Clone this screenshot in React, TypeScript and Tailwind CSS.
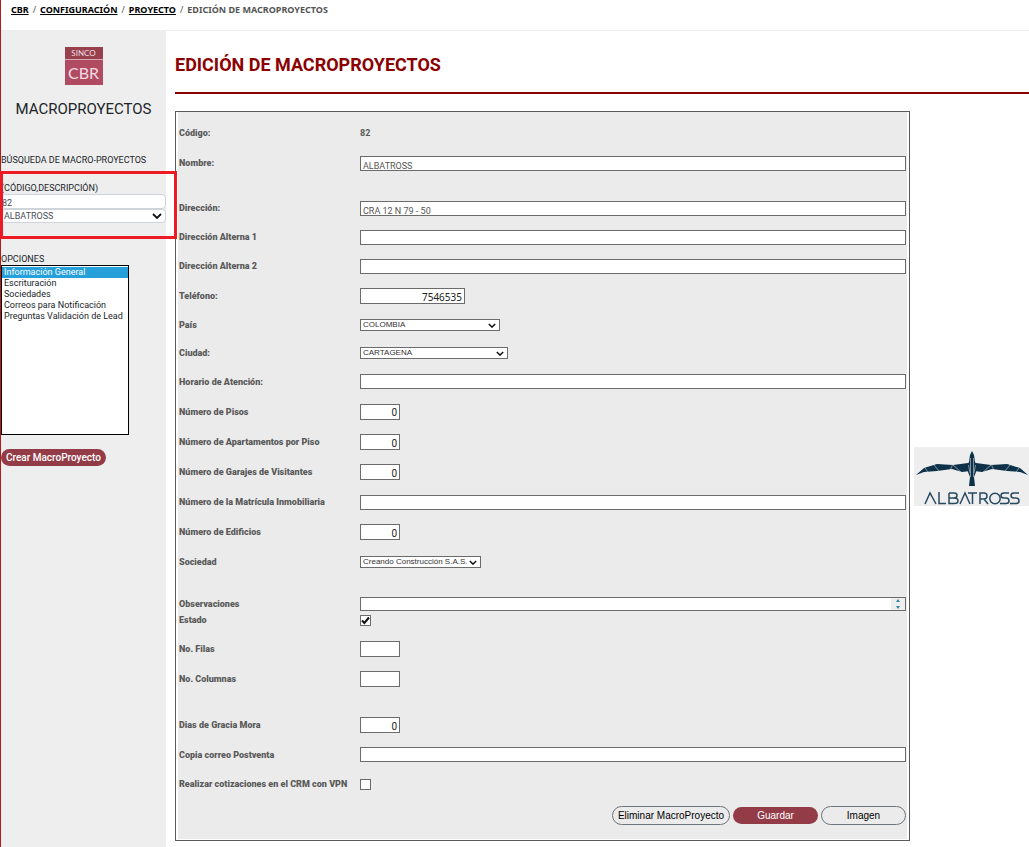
import { useState, type ReactNode } from "react";

const opciones = [
    "Información General",
    "Escrituración",
    "Sociedades",
    "Correos para Notificación",
    "Preguntas Validación de Lead",
];

const boxClass = "border border-[#6b6b6b] bg-white outline-none";
const textClass = boxClass + " w-full h-[15px] px-0.5 pt-[5px] text-[9px] leading-[12px] text-[#555]";
const numberClass = boxClass + " w-10 h-4 px-0.5 pt-0.5 text-[10px] leading-[14px] text-right text-[#222]";

function Chevron({ className }: { className: string }) {
    return (
        <svg viewBox="0 0 10 6" className={className} fill="none" stroke="#111" strokeWidth="1.8">
            <path d="M1 1 L5 5 L9 1" />
        </svg>
    );
}

function Row({ id, label, className, children }: { id: string; label: string; className: string; children: ReactNode }) {
    return (
        <div className={"flex items-center " + className}>
            <label htmlFor={id} className="w-[181px] shrink-0 whitespace-nowrap font-black">{label}</label>
            <div className="flex flex-1 items-center">{children}</div>
        </div>
    );
}

function Lista({ id, value, className }: { id: string; value: string; className: string }) {
    return (
        <div className={"relative " + className}>
            <select id={id} className="block h-3 w-full appearance-none border border-[#6b6b6b] bg-white pl-0.5 font-['Liberation_Sans'] text-[8px] leading-[10px] text-[#333] outline-none">
                <option>{value}</option>
            </select>
            <Chevron className="pointer-events-none absolute top-1 right-1 h-[5px] w-2" />
        </div>
    );
}

function Casilla({ id, checked }: { id: string; checked: boolean }) {
    const [on, setOn] = useState(checked);
    return (
        <div className="relative h-[11px] w-[11px]">
            <input
                id={id}
                type="checkbox"
                checked={on}
                onChange={(e) => setOn(e.target.checked)}
                className="block h-[11px] w-[11px] appearance-none border border-[#6b6b6b] bg-white"
            />
            {on && (
                <svg viewBox="0 0 11 11" className="pointer-events-none absolute inset-0" fill="none" stroke="#111" strokeWidth="2">
                    <path d="M2 5.5 L4.4 8 L9 2.5" />
                </svg>
            )}
        </div>
    );
}

function LogoCbr() {
    return (
        <div className="mx-auto h-[38px] w-[38px] bg-[#b04b62] text-center font-['Lato'] text-[#f3dde1]">
            <div className="h-[13px] border-b border-[#dba9b3] bg-[#98404e] text-[8px] leading-[12px]">SINCO</div>
            <div className="text-[16px] leading-[26px]">CBR</div>
        </div>
    );
}

function LogoAlbatross() {
    return (
        <svg viewBox="0 0 115 59" className="h-[59px] w-[115px] shrink-0 bg-[#eeeeee]" role="img" aria-label="Albatross">
            <g fill="#0d3149">
                <path d="M2 28 L10 21 L23 17 L39 18 L54 16 L56 24 L48 25 L38 22 L23 24 L10 25Z" />
                <path d="M114 28 L106 21 L93 17 L77 18 L62 16 L60 24 L68 25 L78 22 L93 24 L106 25Z" />
                <path d="M58 4 L60 8 L61 15 L63 18 L62 25 L60 30 L61 39 L55 39 L56 30 L54 25 L53 18 L55 15 L56 8Z" />
            </g>
            <g stroke="#cbd5dc" strokeWidth="0.6" fill="none">
                <path d="M20 18 L25 24 M39 17 L36 23 M39 18 L47 25 M96 18 L91 24 M77 17 L80 23 M77 18 L69 25 M11 21 L14 25 M105 21 L102 25" />
                <path d="M56.500 11 V30 M59.500 11 V30 M54.500 18 L56 26 M61.500 18 L60 26" />
            </g>
            <g stroke="#274a60" strokeWidth="1.500" fill="none">
                <path d="M11 57 L16 46 L22 57" />
                <path d="M25 45 V56.500 H32" />
                <path d="M35 46 H40 Q43 46 43 48.500 Q43 51 40 51 H35 M40 51 Q44 51 44 54 Q44 56.500 40 56.500 H35 V46" />
                <path d="M46 57 L51 46 L56 57" />
                <path d="M54 46 H63 M58.500 46 V57" />
                <path d="M66 57 V46 H70 Q73 46 73 49 Q73 52 70 52 H66 M70 52 L74 57" />
                <circle cx="81" cy="51.500" r="5.200" />
                <path d="M95 46 H90 Q87 46 87 48.500 Q87 51 90 51 H92 Q95 51 95 54 Q95 56.500 92 56.500 H86" />
                <path d="M105 46 H100 Q97 46 97 48.500 Q97 51 100 51 H102 Q105 51 105 54 Q105 56.500 102 56.500 H96" />
            </g>
        </svg>
    );
}

function Sidebar() {
    return (
        <aside className="w-[165px] shrink-0 bg-[#eeeeee] pt-4 text-[9px] leading-[12px] text-[#212529]">
            <LogoCbr />
            <h2 className="mt-[13px] text-center text-[15px] leading-[22px]">MACROPROYECTOS</h2>
            <p className="mt-[34px] whitespace-nowrap">BÚSQUEDA DE MACRO-PROYECTOS</p>

            <div className="relative mt-4">
                <label htmlFor="busqueda" className="block">(CÓDIGO,DESCRIPCIÓN)</label>
                <input id="busqueda" defaultValue="82" className="block h-[15px] w-full rounded-sm border border-[#ced4da] bg-white pt-0.5 text-[#495057] outline-none" />
                <select aria-label="Macroproyecto" className="block h-[14px] w-full appearance-none rounded-sm border border-[#ced4da] bg-white pl-0.5 text-[#495057] outline-none">
                    <option>ALBATROSS</option>
                </select>
                <Chevron className="pointer-events-none absolute right-1 bottom-1 h-[6px] w-[10px]" />
                {/* search highlight */}
                <div className="pointer-events-none absolute -top-[11px] -right-[11px] -bottom-4 -left-px border-3 border-[#ed1c24]"></div>
            </div>

            <label htmlFor="opciones" className="mt-[30px] block">OPCIONES</label>
            <select id="opciones" size={5} defaultValue={opciones[0]} className="block h-[170px] w-32 overflow-hidden border border-black bg-white pt-px font-medium outline-none">
                {opciones.map((o) => (
                    <option key={o} className="h-[11px] min-h-0 p-0 pl-0.5 leading-[12px] checked:bg-linear-to-r checked:from-[#26a0da] checked:to-[#26a0da] checked:[-webkit-text-fill-color:white]">{o}</option>
                ))}
            </select>
            <button type="button" className="mt-[14px] h-[17px] rounded-full bg-[#933c48] px-[5px] text-[10px] font-medium whitespace-nowrap text-white">Crear MacroProyecto</button>
        </aside>
    );
}

function Formulario() {
    return (
        <form className="min-w-0 flex-1 border border-[#5a5a5a] px-0.5 pb-px" onSubmit={(e) => e.preventDefault()}>
            <div className="bg-[#ebebeb] px-px pt-1.5 pb-2 text-[9px] leading-[12px] text-[#5a5a5a]">
                <Row id="codigo" label="Código:" className="h-[30px]">
                    <output id="codigo" className="font-bold">82</output>
                </Row>
                <Row id="nombre" label="Nombre:" className="h-[30px]">
                    <input id="nombre" defaultValue="ALBATROSS" className={textClass} />
                </Row>
                <Row id="direccion" label="Dirección:" className="mt-[15px] h-[30px]">
                    <input id="direccion" defaultValue="CRA 12 N 79 - 50" className={textClass} />
                </Row>
                <Row id="alterna1" label="Dirección Alterna 1" className="h-[28px]">
                    <input id="alterna1" className={textClass} />
                </Row>
                <Row id="alterna2" label="Dirección Alterna 2" className="h-[30px]">
                    <input id="alterna2" className={textClass} />
                </Row>
                <Row id="telefono" label="Teléfono:" className="h-[29px]">
                    <input id="telefono" defaultValue="7546535" className="h-4 w-[105px] border border-[#6b6b6b] bg-white px-0.5 pt-0.5 text-right font-['Noto_Sans'] text-[10px] leading-[14px] text-[#222] outline-none" />
                </Row>
                <Row id="pais" label="País" className="h-[29px]">
                    <Lista id="pais" value="COLOMBIA" className="w-[140px]" />
                </Row>
                <Row id="ciudad" label="Ciudad:" className="h-[28px]">
                    <Lista id="ciudad" value="CARTAGENA" className="w-[148px]" />
                </Row>
                <Row id="horario" label="Horario de Atención:" className="h-[29px]">
                    <input id="horario" className={textClass} />
                </Row>
                <Row id="pisos" label="Número de Pisos" className="h-[31px]">
                    <input id="pisos" defaultValue="0" className={numberClass} />
                </Row>
                <Row id="apartamentos" label="Número de Apartamentos por Piso" className="h-[30px]">
                    <input id="apartamentos" defaultValue="0" className={numberClass} />
                </Row>
                <Row id="garajes" label="Número de Garajes de Visitantes" className="h-[30px]">
                    <input id="garajes" defaultValue="0" className={numberClass} />
                </Row>
                <Row id="matricula" label="Número de la Matrícula Inmobiliaria" className="h-[30px]">
                    <input id="matricula" className={textClass} />
                </Row>
                <Row id="edificios" label="Número de Edificios" className="h-[30px]">
                    <input id="edificios" defaultValue="0" className={numberClass} />
                </Row>
                <Row id="sociedad" label="Sociedad" className="h-[30px]">
                    <Lista id="sociedad" value="Creando Construcción S.A.S." className="w-[121px]" />
                </Row>
                <Row id="observaciones" label="Observaciones" className="mt-[19px] h-4">
                    <div className="relative flex-1">
                        <textarea id="observaciones" className="block h-[14px] w-full resize-none overflow-hidden border border-[#6b6b6b] bg-white outline-none" />
                        <div className="pointer-events-none absolute inset-y-px right-px flex w-[14px] items-center justify-center bg-[#eeeeee]">
                            <svg viewBox="0 0 4 10" className="h-[10px] w-1" fill="#2e86ab">
                                <path d="M0 3 L2 0 L4 3Z M0 7 L2 10 L4 7Z" />
                            </svg>
                        </div>
                    </div>
                </Row>
                <Row id="estado" label="Estado" className="h-4">
                    <Casilla id="estado" checked={true} />
                </Row>
                <Row id="filas" label="No. Filas" className="mt-1.5 h-[30px]">
                    <input id="filas" className={numberClass} />
                </Row>
                <Row id="columnas" label="No. Columnas" className="h-[30px]">
                    <input id="columnas" className={numberClass} />
                </Row>
                <Row id="gracia" label="Dias de Gracia Mora" className="mt-4 h-[30px]">
                    <input id="gracia" defaultValue="0" className={numberClass} />
                </Row>
                <Row id="postventa" label="Copia correo Postventa" className="h-[29px]">
                    <input id="postventa" className={textClass} />
                </Row>
                <Row id="vpn" label="Realizar cotizaciones en el CRM con VPN" className="h-[30px]">
                    <Casilla id="vpn" checked={false} />
                </Row>

                <div className="flex h-8 items-center justify-end gap-[3px] font-['Liberation_Sans'] text-[10px] text-black">
                    <button type="button" className="h-[19px] w-[118px] rounded-full border border-[#6c757d] pt-px whitespace-nowrap">Eliminar MacroProyecto</button>
                    <button type="submit" className="h-[17px] w-[85px] rounded-full bg-[#933c48] pt-px text-white">Guardar</button>
                    <button type="button" className="h-[19px] w-[85px] rounded-full border border-[#6c757d] pt-px">Imagen</button>
                </div>
            </div>
        </form>
    );
}

export default function App() {
    return (
        <div className="flex min-h-screen flex-col border-l border-[#b01c1c] bg-white font-['Roboto',sans-serif]">
            <nav className="flex h-[31px] items-start gap-1 border-b border-[#eeeeee] pt-[3px] pl-[10px] font-['Noto_Sans'] text-[9px] leading-[13px] font-bold text-[#555]">
                <a href="#" className="text-black underline">CBR</a>
                <span className="font-normal">/</span>
                <a href="#" className="text-black underline">CONFIGURACIÓN</a>
                <span className="font-normal">/</span>
                <a href="#" className="text-black underline">PROYECTO</a>
                <span className="font-normal">/</span>
                <span>EDICIÓN DE MACROPROYECTOS</span>
            </nav>
            <div className="flex flex-1">
                <Sidebar />
                <main className="min-w-0 flex-1 pl-[9px]">
                    <h1 className="border-b-2 border-[#8b0000] pt-[21px] pb-[14px] text-[18px] leading-[26px] font-bold text-[#8b0000]">EDICIÓN DE MACROPROYECTOS</h1>
                    <div className="mt-[17px] flex items-center gap-1">
                        <Formulario />
                        <LogoAlbatross />
                    </div>
                </main>
            </div>
        </div>
    );
}
